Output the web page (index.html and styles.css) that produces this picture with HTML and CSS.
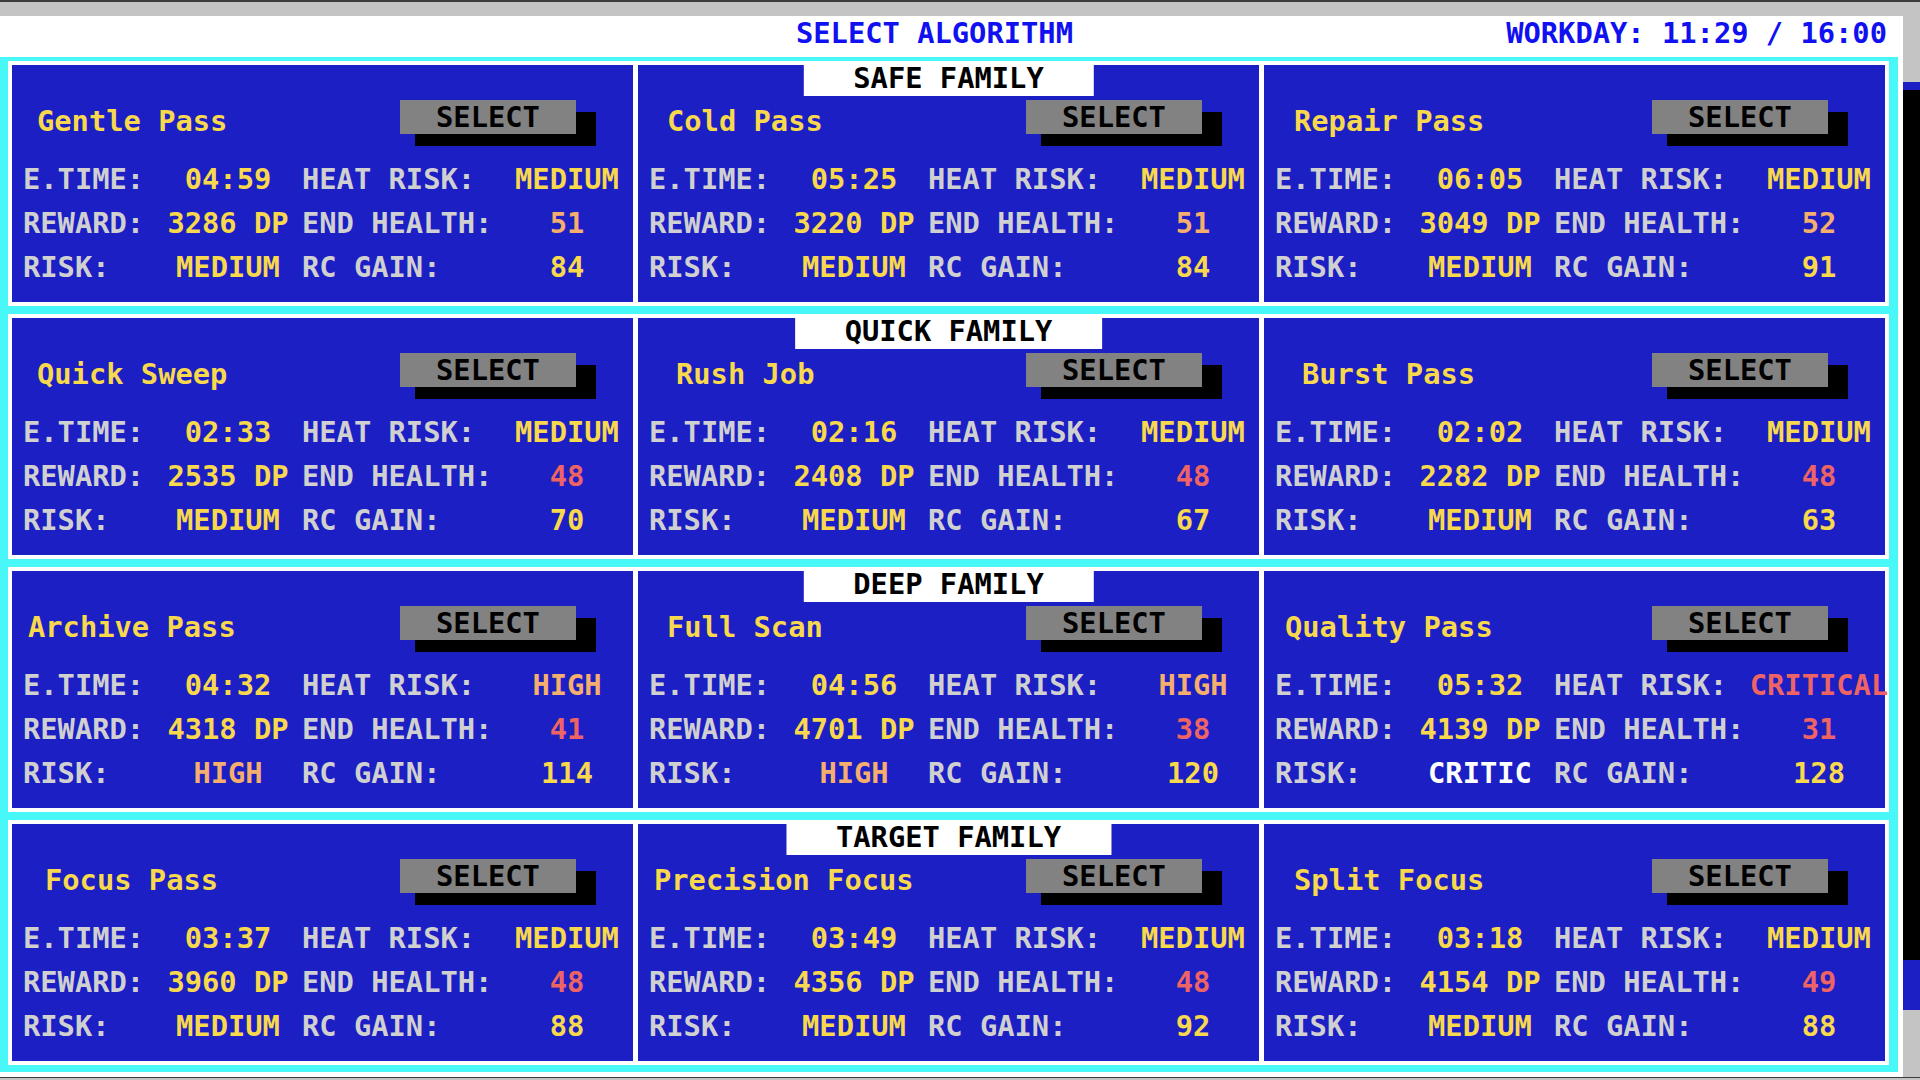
FILE: index.html
```html
<!DOCTYPE html>
<html lang="en">
<head>
<meta charset="utf-8">
<title>Select Algorithm</title>
<link rel="stylesheet" href="styles.css">
</head>
<body>
<div class="topbar"></div>
<div class="main">
  <div class="window">
    <header class="header">
      <span class="title">SELECT ALGORITHM</span>
      <span class="clock">WORKDAY: 11:29 / 16:00</span>
    </header>
    <div class="frame">
      <section class="row">
        <div class="tab">SAFE FAMILY</div>
        <div class="card">
          <div class="card-head"><span class="name i25">Gentle Pass</span><span class="btn">SELECT</span></div>
          <div class="stats">
            <span class="lbl">E.TIME:</span><span class="val y">04:59</span><span class="lbl l2">HEAT RISK:</span><span class="val y">MEDIUM</span>
            <span class="lbl">REWARD:</span><span class="val y">3286 DP</span><span class="lbl l2">END HEALTH:</span><span class="val o">51</span>
            <span class="lbl">RISK:</span><span class="val y">MEDIUM</span><span class="lbl l2">RC GAIN:</span><span class="val y">84</span>
          </div>
        </div>
        <div class="card">
          <div class="card-head"><span class="name i29">Cold Pass</span><span class="btn">SELECT</span></div>
          <div class="stats">
            <span class="lbl">E.TIME:</span><span class="val y">05:25</span><span class="lbl l2">HEAT RISK:</span><span class="val y">MEDIUM</span>
            <span class="lbl">REWARD:</span><span class="val y">3220 DP</span><span class="lbl l2">END HEALTH:</span><span class="val o">51</span>
            <span class="lbl">RISK:</span><span class="val y">MEDIUM</span><span class="lbl l2">RC GAIN:</span><span class="val y">84</span>
          </div>
        </div>
        <div class="card">
          <div class="card-head"><span class="name i30">Repair Pass</span><span class="btn">SELECT</span></div>
          <div class="stats">
            <span class="lbl">E.TIME:</span><span class="val y">06:05</span><span class="lbl l2">HEAT RISK:</span><span class="val y">MEDIUM</span>
            <span class="lbl">REWARD:</span><span class="val y">3049 DP</span><span class="lbl l2">END HEALTH:</span><span class="val o">52</span>
            <span class="lbl">RISK:</span><span class="val y">MEDIUM</span><span class="lbl l2">RC GAIN:</span><span class="val y">91</span>
          </div>
        </div>
      </section>

      <section class="row">
        <div class="tab">QUICK FAMILY</div>
        <div class="card">
          <div class="card-head"><span class="name i25">Quick Sweep</span><span class="btn">SELECT</span></div>
          <div class="stats">
            <span class="lbl">E.TIME:</span><span class="val y">02:33</span><span class="lbl l2">HEAT RISK:</span><span class="val y">MEDIUM</span>
            <span class="lbl">REWARD:</span><span class="val y">2535 DP</span><span class="lbl l2">END HEALTH:</span><span class="val r">48</span>
            <span class="lbl">RISK:</span><span class="val y">MEDIUM</span><span class="lbl l2">RC GAIN:</span><span class="val y">70</span>
          </div>
        </div>
        <div class="card">
          <div class="card-head"><span class="name i38">Rush Job</span><span class="btn">SELECT</span></div>
          <div class="stats">
            <span class="lbl">E.TIME:</span><span class="val y">02:16</span><span class="lbl l2">HEAT RISK:</span><span class="val y">MEDIUM</span>
            <span class="lbl">REWARD:</span><span class="val y">2408 DP</span><span class="lbl l2">END HEALTH:</span><span class="val r">48</span>
            <span class="lbl">RISK:</span><span class="val y">MEDIUM</span><span class="lbl l2">RC GAIN:</span><span class="val y">67</span>
          </div>
        </div>
        <div class="card">
          <div class="card-head"><span class="name i38">Burst Pass</span><span class="btn">SELECT</span></div>
          <div class="stats">
            <span class="lbl">E.TIME:</span><span class="val y">02:02</span><span class="lbl l2">HEAT RISK:</span><span class="val y">MEDIUM</span>
            <span class="lbl">REWARD:</span><span class="val y">2282 DP</span><span class="lbl l2">END HEALTH:</span><span class="val r">48</span>
            <span class="lbl">RISK:</span><span class="val y">MEDIUM</span><span class="lbl l2">RC GAIN:</span><span class="val y">63</span>
          </div>
        </div>
      </section>

      <section class="row">
        <div class="tab">DEEP FAMILY</div>
        <div class="card">
          <div class="card-head"><span class="name i16">Archive Pass</span><span class="btn">SELECT</span></div>
          <div class="stats">
            <span class="lbl">E.TIME:</span><span class="val y">04:32</span><span class="lbl l2">HEAT RISK:</span><span class="val o">HIGH</span>
            <span class="lbl">REWARD:</span><span class="val y">4318 DP</span><span class="lbl l2">END HEALTH:</span><span class="val r">41</span>
            <span class="lbl">RISK:</span><span class="val o">HIGH</span><span class="lbl l2">RC GAIN:</span><span class="val y">114</span>
          </div>
        </div>
        <div class="card">
          <div class="card-head"><span class="name i29">Full Scan</span><span class="btn">SELECT</span></div>
          <div class="stats">
            <span class="lbl">E.TIME:</span><span class="val y">04:56</span><span class="lbl l2">HEAT RISK:</span><span class="val o">HIGH</span>
            <span class="lbl">REWARD:</span><span class="val y">4701 DP</span><span class="lbl l2">END HEALTH:</span><span class="val r">38</span>
            <span class="lbl">RISK:</span><span class="val o">HIGH</span><span class="lbl l2">RC GAIN:</span><span class="val y">120</span>
          </div>
        </div>
        <div class="card">
          <div class="card-head"><span class="name i21">Quality Pass</span><span class="btn">SELECT</span></div>
          <div class="stats">
            <span class="lbl">E.TIME:</span><span class="val y">05:32</span><span class="lbl l2">HEAT RISK:</span><span class="val r">CRITICAL</span>
            <span class="lbl">REWARD:</span><span class="val y">4139 DP</span><span class="lbl l2">END HEALTH:</span><span class="val r">31</span>
            <span class="lbl">RISK:</span><span class="val w">CRITIC</span><span class="lbl l2">RC GAIN:</span><span class="val y">128</span>
          </div>
        </div>
      </section>

      <section class="row">
        <div class="tab">TARGET FAMILY</div>
        <div class="card">
          <div class="card-head"><span class="name i33">Focus Pass</span><span class="btn">SELECT</span></div>
          <div class="stats">
            <span class="lbl">E.TIME:</span><span class="val y">03:37</span><span class="lbl l2">HEAT RISK:</span><span class="val y">MEDIUM</span>
            <span class="lbl">REWARD:</span><span class="val y">3960 DP</span><span class="lbl l2">END HEALTH:</span><span class="val r">48</span>
            <span class="lbl">RISK:</span><span class="val y">MEDIUM</span><span class="lbl l2">RC GAIN:</span><span class="val y">88</span>
          </div>
        </div>
        <div class="card">
          <div class="card-head"><span class="name i16">Precision Focus</span><span class="btn">SELECT</span></div>
          <div class="stats">
            <span class="lbl">E.TIME:</span><span class="val y">03:49</span><span class="lbl l2">HEAT RISK:</span><span class="val y">MEDIUM</span>
            <span class="lbl">REWARD:</span><span class="val y">4356 DP</span><span class="lbl l2">END HEALTH:</span><span class="val r">48</span>
            <span class="lbl">RISK:</span><span class="val y">MEDIUM</span><span class="lbl l2">RC GAIN:</span><span class="val y">92</span>
          </div>
        </div>
        <div class="card">
          <div class="card-head"><span class="name i30">Split Focus</span><span class="btn">SELECT</span></div>
          <div class="stats">
            <span class="lbl">E.TIME:</span><span class="val y">03:18</span><span class="lbl l2">HEAT RISK:</span><span class="val y">MEDIUM</span>
            <span class="lbl">REWARD:</span><span class="val y">4154 DP</span><span class="lbl l2">END HEALTH:</span><span class="val r">49</span>
            <span class="lbl">RISK:</span><span class="val y">MEDIUM</span><span class="lbl l2">RC GAIN:</span><span class="val y">88</span>
          </div>
        </div>
      </section>
    </div>
  </div>
  <div class="scroll">
    <div class="s-top"></div>
    <div class="s-cap"></div>
    <div class="s-track"></div>
    <div class="s-thumb"></div>
    <div class="s-bot"></div>
  </div>
</div>
<div class="bottombar"></div>
</body>
</html>
```

FILE: styles.css
```css
* { box-sizing: border-box; }

html, body {
  margin: 0;
  padding: 0;
}

body {
  width: 1920px;
  height: 1080px;
  overflow: hidden;
  background: #c4c4c4;
  font-family: "DejaVu Sans Mono", "Liberation Mono", monospace;
  font-weight: bold;
  font-size: 28.75px;
  letter-spacing: 0;
}

.topbar {
  height: 16px;
  background: #c4c4c4;
  border-top: 2px solid #3c3c3c;
}

.main {
  display: flex;
  height: 1061px;
}

.window {
  width: 1903px;
  flex: none;
  display: flex;
  flex-direction: column;
}

.header {
  height: 41px;
  background: #ffffff;
  display: flex;
  align-items: flex-start;
  line-height: 35px;
  color: #1010f0;
  padding-right: 16px;
  white-space: nowrap;
}

.title {
  margin-left: 796px;
}

.clock {
  margin-left: auto;
}

.frame {
  height: 1020px;
  background: #48f8f8;
  padding: 4px 9px 7px 8px;
  border-right: 5px solid #ffffff;
  border-bottom: 5px solid #ffffff;
  display: flex;
  flex-direction: column;
  gap: 8px;
}

.row {
  position: relative;
  height: 245px;
  flex: none;
  background: #ffffff;
  padding: 4px;
  display: grid;
  grid-template-columns: minmax(0, 1fr) minmax(0, 1fr) minmax(0, 1fr);
  column-gap: 5px;
}

.tab {
  position: absolute;
  top: 3px;
  left: 50%;
  transform: translateX(-50%);
  z-index: 2;
  height: 32px;
  padding: 0 50px;
  background: #ffffff;
  color: #000000;
  line-height: 28px;
  white-space: nowrap;
}

.card {
  position: relative;
  z-index: 0;
  min-width: 0;
  background: #1b1fc4;
  height: 237px;
}

.card-head {
  display: flex;
  align-items: flex-start;
  height: 69px;
  padding-top: 35px;
  white-space: nowrap;
}

.name {
  color: #f8d84c;
  line-height: 34px;
  margin-top: 4px;
}

.i16 { padding-left: 16px; }
.i21 { padding-left: 21px; }
.i25 { padding-left: 25px; }
.i29 { padding-left: 29px; }
.i30 { padding-left: 30px; }
.i33 { padding-left: 33px; }
.i38 { padding-left: 38px; }

.btn {
  position: relative;
  margin-left: auto;
  margin-right: 57px;
  width: 176px;
  height: 34px;
  flex: none;
  line-height: 34px;
  text-align: center;
  background: #828282;
  color: #000000;
}

.btn::before {
  content: "";
  position: absolute;
  left: 15px;
  top: 12px;
  right: -20px;
  bottom: -12px;
  background: #000000;
  z-index: -1;
}

.stats {
  margin-top: 23px;
  padding-left: 11px;
  display: grid;
  grid-template-columns: 135px 140px 199px 140px;
  grid-auto-rows: 44px;
  line-height: 44px;
  white-space: nowrap;
}

.lbl {
  color: #d0d0d0;
}

.l2 {
  padding-left: 4px;
}

.val {
  display: flex;
  justify-content: center;
}

.y { color: #f8d84c; }
.o { color: #f6ae6e; }
.r { color: #ee6464; }
.w { color: #ffffff; }

.scroll {
  width: 17px;
  flex: none;
  display: flex;
  flex-direction: column;
}

.s-top { height: 66px; background: #c4c4c4; }
.s-cap { height: 8px; background: #1b1fc4; }
.s-track { height: 870px; background: #000000; }
.s-thumb { height: 50px; background: #1b1fc4; }
.s-bot { flex: 1; background: #c4c4c4; }

.bottombar {
  height: 3px;
  background: #c4c4c4;
  border-top: 1px solid #3c3c3c;
}
```
